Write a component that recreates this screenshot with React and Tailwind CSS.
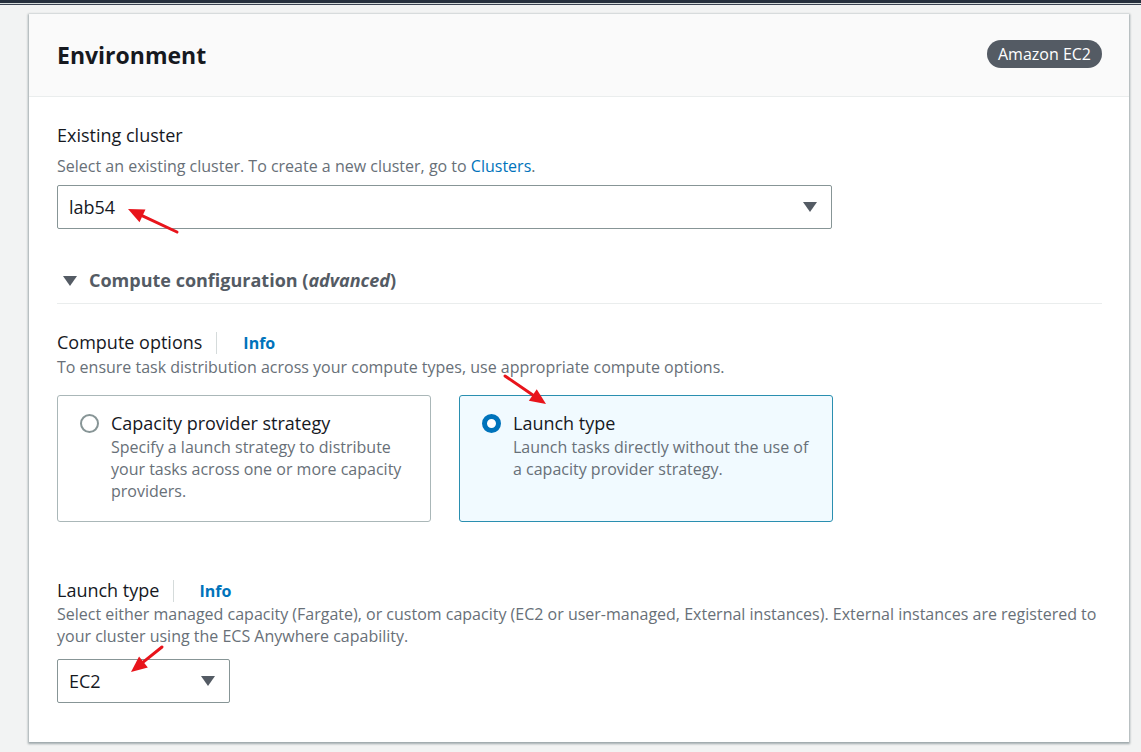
import React from "react";

function Caret({ className = "" }) {
  return (
    <svg className={className} width="14" height="10" viewBox="0 0 14 10">
      <path d="M0 0 H14 L7 10 Z" fill="#545b64" />
    </svg>
  );
}

function Arrow({ x1, y1, x2, y2 }) {
  const ang = Math.atan2(y2 - y1, x2 - x1);
  const len = 16;
  const w = 7;
  const bx = x2 - len * Math.cos(ang);
  const by = y2 - len * Math.sin(ang);
  const px = -Math.sin(ang) * w;
  const py = Math.cos(ang) * w;
  return (
    <svg className="absolute left-0 top-0 pointer-events-none" width="1141" height="752">
      <line x1={x1} y1={y1} x2={bx} y2={by} stroke="#e8141b" strokeWidth="3" strokeLinecap="round" />
      <polygon points={`${x2},${y2} ${bx + px},${by + py} ${bx - px},${by - py}`} fill="#e8141b" />
    </svg>
  );
}

export default function App() {
  return (
    <div
      className="relative w-[1141px] h-[752px] overflow-hidden bg-[#f2f3f3]"
      style={{ fontFamily: '"Open Sans", "Noto Sans", sans-serif' }}
    >
      <div className="h-[3px] bg-[#262f3d]" />
      <div className="h-[1px] bg-[#d5dbdb]" />
      <div className="h-[1px] bg-[#3b4352]" />
      <div className="pl-[29px] pr-[12px] pt-[9px]">
        <div className="w-[1100px] bg-white shadow-[0_1px_2px_1px_rgba(0,28,36,0.35)]">
          <div className="h-[83px] bg-[#fafafa] border-b border-[#eaeded] flex items-center justify-between pl-[28px] pr-[27px]">
            <div className="text-[23px] font-bold text-[#16191f] pt-[1px]">Environment</div>
            <div className="h-[28px] -mt-[3px] px-[11px] rounded-full bg-[#545b64] text-white text-[16px] flex items-center">
              Amazon EC2
            </div>
          </div>
          <div className="pl-[28px] pr-[27px] pt-[25px] pb-[39px]">
            <div className="text-[18px] text-[#16191f] leading-[26px]">Existing cluster</div>
            <div className="text-[16px] text-[#687078] leading-[22px] mt-[7px]">
              Select an existing cluster. To create a new cluster, go to{" "}
              <span className="text-[#0073bb]">Clusters</span>.
            </div>
            <div className="mt-[8px] w-[775px] h-[44px] border border-[#879596] rounded-[2px] flex items-center justify-between pl-[11px] pr-[14px]">
              <span className="text-[18px] text-[#16191f]">lab54</span>
              <Caret />
            </div>

            <div className="mt-[38px] flex items-center gap-[12px] pl-[6px] pb-[9px] border-b border-[#eaeded]">
              <Caret />
              <span className="text-[18px] font-bold text-[#545b64]">
                Compute configuration (<i>advanced</i>)
              </span>
            </div>

            <div className="mt-[25px] flex items-center">
              <span className="text-[18px] text-[#16191f]">Compute options</span>
              <span className="ml-[14px] mr-[13px] w-[1px] h-[22px] bg-[#d5dbdb]" />
              <span className="ml-[13px] text-[16px] font-bold text-[#0073bb]">Info</span>
            </div>
            <div className="text-[16px] text-[#687078] leading-[22px]">
              To ensure task distribution across your compute types, use appropriate compute options.
            </div>

            <div className="mt-[17px] flex gap-[28px]">
              <div className="w-[374px] h-[127px] border border-[#aab7b8] rounded-[3px] pl-[22px] pr-[14px] pt-[14px] flex gap-[12px]">
                <div className="mt-[4px] w-[19px] h-[19px] rounded-full border-2 border-[#879596] bg-white shrink-0" />
                <div>
                  <div className="text-[18px] text-[#16191f] leading-[26px]">Capacity provider strategy</div>
                  <div className="text-[16px] text-[#687078] leading-[22px]">
                    Specify a launch strategy to distribute your tasks across one or more capacity providers.
                  </div>
                </div>
              </div>
              <div className="w-[374px] h-[127px] border border-[#2a8fb0] bg-[#f1faff] rounded-[3px] pl-[22px] pr-[14px] pt-[14px] flex gap-[12px]">
                <div className="mt-[4px] w-[19px] h-[19px] rounded-full border-[5px] border-[#0073bb] bg-white shrink-0" />
                <div>
                  <div className="text-[18px] text-[#16191f] leading-[26px]">Launch type</div>
                  <div className="text-[16px] text-[#687078] leading-[22px]">
                    Launch tasks directly without the use of a capacity provider strategy.
                  </div>
                </div>
              </div>
            </div>

            <div className="mt-[55px] flex items-center">
              <span className="text-[18px] text-[#16191f]">Launch type</span>
              <span className="ml-[14px] mr-[13px] w-[1px] h-[22px] bg-[#d5dbdb]" />
              <span className="ml-[12px] text-[16px] font-bold text-[#0073bb]">Info</span>
            </div>
            <div className="text-[16px] text-[#687078] leading-[22px] -mt-[1px]">
              Select either managed capacity (Fargate), or custom capacity (EC2 or user-managed, External instances). External instances are registered to your cluster using the ECS Anywhere capability.
            </div>
            <div className="mt-[12px] w-[173px] h-[44px] border border-[#879596] rounded-[2px] flex items-center justify-between pl-[11px] pr-[14px]">
              <span className="text-[18px] text-[#16191f]">EC2</span>
              <Caret />
            </div>
          </div>
        </div>
      </div>

      <Arrow x1={177} y1={232} x2={128} y2={209} />
      <Arrow x1={505} y1={376} x2={546} y2={404} />
      <Arrow x1={162} y1={647} x2={131} y2={672} />
    </div>
  );
}
